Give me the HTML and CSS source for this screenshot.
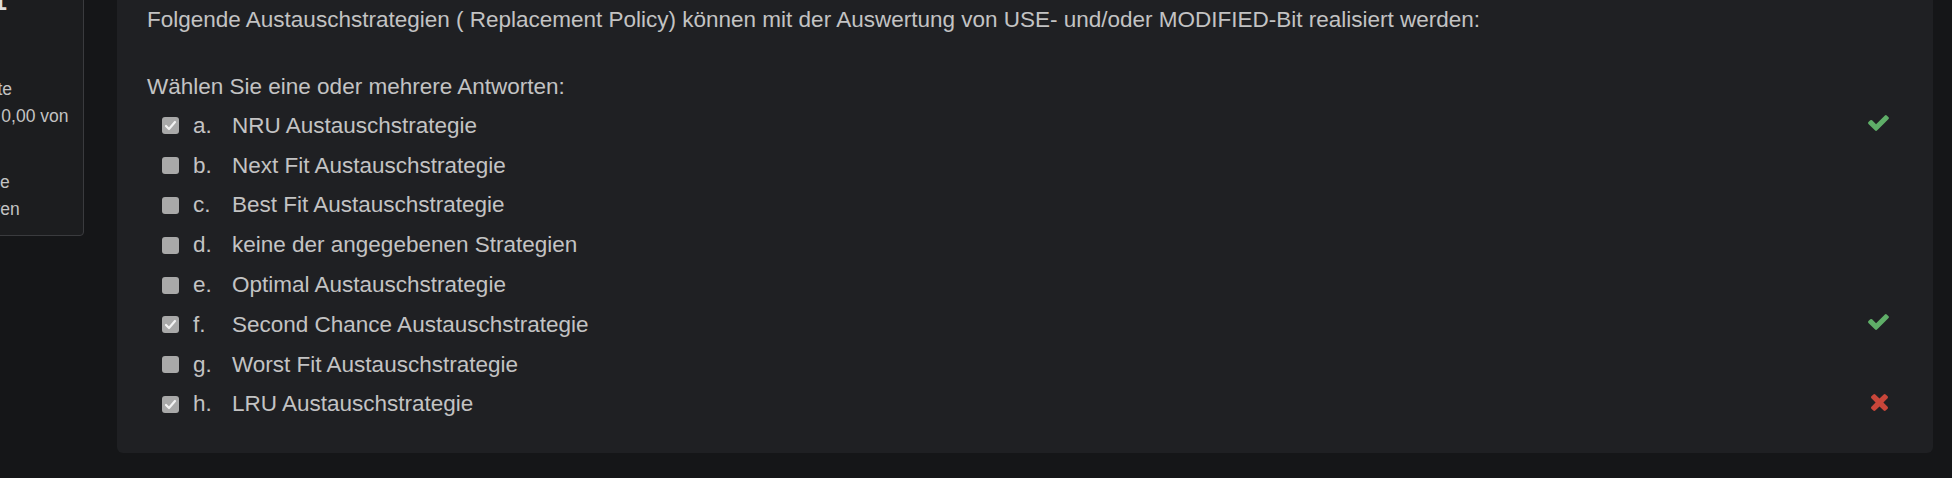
FILE: index.html
```html
<!DOCTYPE html>
<html lang="de">
<head>
<meta charset="utf-8">
<title>Frage 1</title>
<link rel="stylesheet" href="styles.css">
</head>
<body>
<div class="page">
  <aside class="info">
    <h3 class="no">Frage <span class="qno">1</span></h3>
    <div class="state">Falsch</div>
    <div class="grade">Erreichte Punkte 0,00 von 1,00</div>
    <div class="flag"><svg class="flagicon" viewBox="0 0 16 16" width="16" height="16"><path d="M3 1v14M3 2h9l-2 3 2 3H3" fill="none" stroke="#c3c3c3" stroke-width="1.5"/></svg>Frage markieren</div>
  </aside>
  <main class="card">
    <p class="qtext">Folgende Austauschstrategien ( Replacement Policy) können mit der Auswertung von USE- und/oder MODIFIED-Bit realisiert werden:</p>
    <div class="prompt">Wählen Sie eine oder mehrere Antworten:</div>
    <div class="answers">
      <div class="row">
        <span class="box"><svg viewBox="0 0 17 17" width="17" height="17"><path d="M4 9l3 3 6-7" fill="none" stroke="#f2f2f2" stroke-width="2.2" stroke-linecap="round" stroke-linejoin="round"/></svg></span>
        <span class="num">a.</span>
        <span class="label">NRU Austauschstrategie</span>
        <svg class="icon ok" viewBox="121 334 1550 1188" width="21" height="16"><path d="M1671 566q0 40-28 68l-724 724-136 136q-28 28-68 28t-68-28l-136-136-362-362q-28-28-28-68t28-68l136-136q28-28 68-28t68 28l294 295 656-657q28-28 68-28t68 28l136 136q28 28 28 68z"/></svg>
      </div>
      <div class="row">
        <span class="box"></span>
        <span class="num">b.</span>
        <span class="label">Next Fit Austauschstrategie</span>
      </div>
      <div class="row">
        <span class="box"></span>
        <span class="num">c.</span>
        <span class="label">Best Fit Austauschstrategie</span>
      </div>
      <div class="row">
        <span class="box"></span>
        <span class="num">d.</span>
        <span class="label">keine der angegebenen Strategien</span>
      </div>
      <div class="row">
        <span class="box"></span>
        <span class="num">e.</span>
        <span class="label">Optimal Austauschstrategie</span>
      </div>
      <div class="row">
        <span class="box"><svg viewBox="0 0 17 17" width="17" height="17"><path d="M4 9l3 3 6-7" fill="none" stroke="#f2f2f2" stroke-width="2.2" stroke-linecap="round" stroke-linejoin="round"/></svg></span>
        <span class="num">f.</span>
        <span class="label">Second Chance Austauschstrategie</span>
        <svg class="icon ok" viewBox="121 334 1550 1188" width="21" height="16"><path d="M1671 566q0 40-28 68l-724 724-136 136q-28 28-68 28t-68-28l-136-136-362-362q-28-28-28-68t28-68l136-136q28-28 68-28t68 28l294 295 656-657q28-28 68-28t68 28l136 136q28 28 28 68z"/></svg>
      </div>
      <div class="row">
        <span class="box"></span>
        <span class="num">g.</span>
        <span class="label">Worst Fit Austauschstrategie</span>
      </div>
      <div class="row">
        <span class="box"><svg viewBox="0 0 17 17" width="17" height="17"><path d="M4 9l3 3 6-7" fill="none" stroke="#f2f2f2" stroke-width="2.2" stroke-linecap="round" stroke-linejoin="round"/></svg></span>
        <span class="num">h.</span>
        <span class="label">LRU Austauschstrategie</span>
        <svg class="icon bad" viewBox="302 366 1188 1188" width="17" height="17"><path d="M1490 1322q0 40-28 68l-136 136q-28 28-68 28t-68-28l-294-294-294 294q-28 28-68 28t-68-28l-136-136q-28-28-28-68t28-68l294-294-294-294q-28-28-28-68t28-68l136-136q28-28 68-28t68 28l294 294 294-294q28-28 68-28t68 28l136 136q28 28 28 68t-28 68l-294 294 294 294q28 28 28 68z"/></svg>
      </div>
    </div>
  </main>
</div>
</body>
</html>
```

FILE: styles.css
```css
html, body {
  margin: 0;
  padding: 0;
  background: #151618;
  overflow: hidden;
}

body {
  width: 1952px;
  height: 478px;
  font-family: "Liberation Sans", Arial, sans-serif;
  color: #c3c3c3;
}

.page {
  display: flex;
  align-items: flex-start;
  margin-top: -20px;
}

.info {
  flex: 0 0 auto;
  box-sizing: content-box;
  width: 128px;
  margin-left: -70px;
  padding: 7px 13px 12px 11px;
  background: #1c1d1f;
  border: 1px solid #3a3b3e;
  border-radius: 4px;
  font-size: 17.5px;
  line-height: 27px;
}

.info .no {
  margin: 0;
  font-size: 17.5px;
  font-weight: normal;
  line-height: 26px;
  color: #dcdcdc;
}

.info .qno {
  font-size: 26px;
  font-weight: bold;
  line-height: 26px;
}

.info .state {
  margin-top: 16px;
}

.info .grade {
  margin-top: 16px;
}

.info .flag {
  margin-top: 12px;
}

.flagicon {
  vertical-align: -2px;
  margin-right: 6px;
}

.card {
  flex: 1 1 auto;
  margin-left: 33px;
  margin-right: 19px;
  padding: 26px 30px 29px 30px;
  background: #1f2023;
  border-radius: 6px;
  font-size: 22.5px;
  line-height: 28px;
}

.qtext {
  margin: 0 0 39px 0;
}

.prompt {
  margin-bottom: 5px;
}

.row {
  display: flex;
  align-items: center;
  padding: 5.9px 0 5.9px 15px;
  line-height: 28px;
}

.box {
  flex: 0 0 auto;
  width: 17px;
  height: 17px;
  border-radius: 3px;
  background: #a9a9a9;
  display: flex;
}

.num {
  flex: 0 0 auto;
  width: 39px;
  margin-left: 14px;
}

.label {
  flex: 0 1 auto;
}

.icon {
  flex: 0 0 auto;
  margin-left: auto;
  margin-right: 14px;
  margin-bottom: 5px;
}

.icon.ok {
  fill: #5fae68;
}

.icon.bad {
  fill: #c8463a;
  margin-right: 15px;
  margin-bottom: 4px;
}
```
